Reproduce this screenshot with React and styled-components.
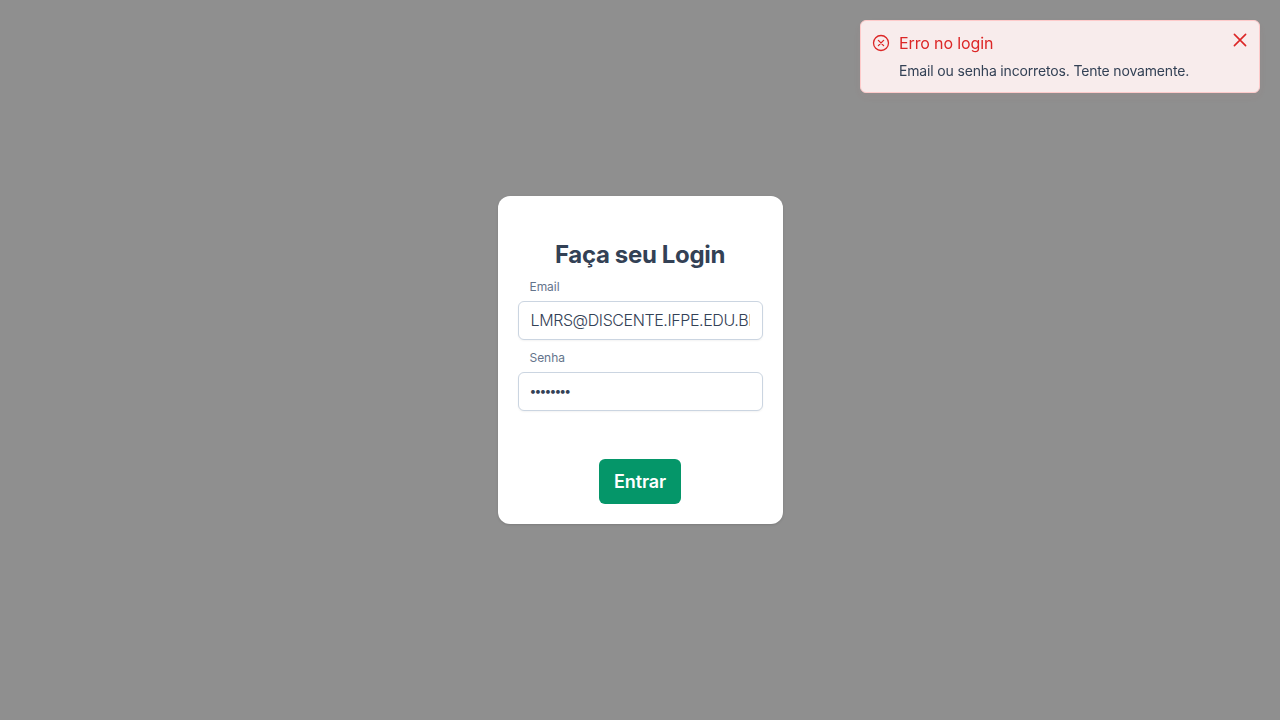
import React from "react";
import styled, { createGlobalStyle } from "styled-components";

const GlobalStyle = createGlobalStyle`
  *, *::before, *::after { box-sizing: border-box; }
  body {
    margin: 0;
    background: #8f8f8f;
    font-family: Inter, "Liberation Sans", sans-serif;
    color: #334155;
  }
`;

const Page = styled.main`
  display: flex;
  align-items: center;
  justify-content: center;
  height: 100vh;
`;

const Card = styled.form`
  display: flex;
  flex-direction: column;
  width: 285px;
  height: 328px;
  padding: 44px 20px 20px;
  background: #fff;
  border-radius: 12px;
  box-shadow: 0 1px 3px rgba(0, 0, 0, 0.1), 0 1px 2px -1px rgba(0, 0, 0, 0.1);
`;

const Title = styled.h1`
  margin: 0;
  text-align: center;
  font-size: 24px;
  line-height: 30px;
  font-weight: 700;
  letter-spacing: -0.35px;
`;

const Field = styled.div`
  display: flex;
  flex-direction: column;
  margin-top: ${(p) => (p.$first ? "9px" : "10px")};
`;

const Label = styled.label`
  height: 22px;
  margin-left: 12px;
  font-size: 12px;
  line-height: 15px;
  color: #64748b;
  letter-spacing: -0.05px;
`;

const Input = styled.input`
  width: 100%;
  height: 39px;
  padding: 7px 12px 9px;
  border: 1px solid #cbd5e1;
  border-radius: 6px;
  outline: none;
  background: #fff;
  color: #334155;
  font-family: inherit;
  font-size: 16px;
  font-weight: 300;
  letter-spacing: -0.4px;
  box-shadow: 0 1px 2px rgba(18, 18, 23, 0.05);
`;

const PasswordInput = styled(Input)`
  padding-left: 10.5px;
  font-size: 14px;
  letter-spacing: -2.9px;
`;

const Submit = styled.button`
  align-self: center;
  width: 82px;
  height: 45px;
  margin-top: auto;
  padding: 0;
  border: 0;
  border-radius: 6px;
  background: #059669;
  color: #fff;
  font-family: inherit;
  font-size: 18px;
  font-weight: 600;
  letter-spacing: -0.15px;
`;

const Toast = styled.section`
  position: fixed;
  top: 20px;
  right: 20px;
  display: flex;
  gap: 10px;
  width: 400px;
  height: 73px;
  padding: 11px;
  border: 1px solid #fecaca;
  border-radius: 6px;
  background: #f8ecec;
  box-shadow: 0 4px 8px rgba(239, 68, 68, 0.04);
`;

const StatusIcon = styled.svg`
  flex: none;
  width: 18px;
  height: 18px;
  margin-top: 2px;
  margin-right: -1px;
`;

const Message = styled.div`
  flex: 1;
  padding-top: 1px;
  white-space: nowrap;
`;

const Summary = styled.div`
  font-size: 16px;
  line-height: 21px;
  font-weight: 400;
  letter-spacing: -0.13px;
  color: #dc2626;
`;

const Detail = styled.div`
  margin-top: 8px;
  font-size: 14px;
  line-height: 18px;
  font-weight: 400;
  letter-spacing: -0.16px;
`;

const Close = styled.button`
  flex: none;
  display: flex;
  width: 16px;
  height: 16px;
  padding: 0;
  border: 0;
  background: transparent;
`;

export default function App() {
  return (
    <>
      <GlobalStyle />
      <Page>
        <Card>
          <Title>Faça seu Login</Title>
          <Field $first>
            <Label htmlFor="email">Email</Label>
            <Input id="email" defaultValue="LMRS@DISCENTE.IFPE.EDU.BR" />
          </Field>
          <Field>
            <Label htmlFor="senha">Senha</Label>
            <PasswordInput id="senha" type="password" defaultValue="12345678" />
          </Field>
          <Submit type="button">Entrar</Submit>
        </Card>
      </Page>
      <Toast role="alert">
        <StatusIcon viewBox="0 0 18 18" fill="none" stroke="#dc2626" strokeWidth="1.3" strokeLinecap="round">
          <circle cx="9" cy="9" r="7.5" />
          <path d="M6.4 6.4l5.2 5.2M11.6 6.4l-5.2 5.2" strokeWidth="1.3" />
        </StatusIcon>
        <Message>
          <Summary>Erro no login</Summary>
          <Detail>Email ou senha incorretos. Tente novamente.</Detail>
        </Message>
        <Close type="button" aria-label="Fechar">
          <svg width="16" height="16" viewBox="0 0 16 16" fill="none" stroke="#dc2626" strokeWidth="1.6" strokeLinecap="round">
            <path d="M2.4 2.4l11.2 11.2M13.6 2.4L2.4 13.6" />
          </svg>
        </Close>
      </Toast>
    </>
  );
}
